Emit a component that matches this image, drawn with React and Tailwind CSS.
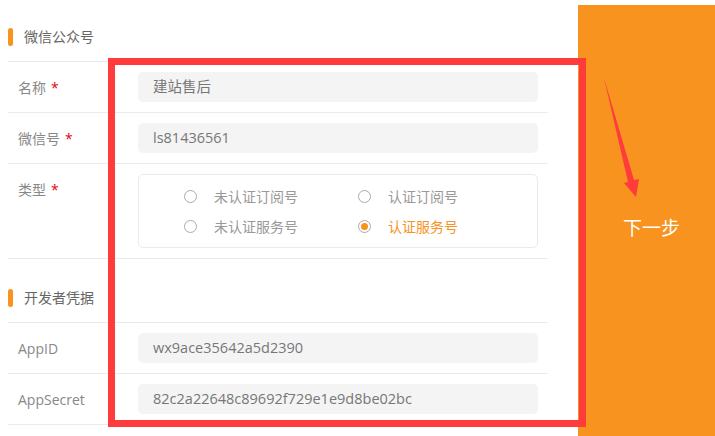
const FONT = { fontFamily: '"Open Sans", "Noto Sans CJK SC", sans-serif' };

const Section = ({ title, className }) => (
  <div className={`flex items-start border-b border-[#ebebeb] ${className}`}>
    <div className="flex h-[18px] items-center">
      <span className="h-[18px] w-[5px] rounded-full bg-[#f7931e]" />
      <span className="ml-[11px] text-[14px] leading-none text-[#666]">{title}</span>
    </div>
  </div>
);

const Row = ({ label, required, children }) => (
  <div className="flex items-start border-b border-[#ebebeb] py-[10px]">
    <div className="flex h-[30px] w-[130px] items-center pl-[10px] text-[14px] text-[#888]">
      {label}
      {required && <span className="ml-[5px] text-[#e60012]">*</span>}
    </div>
    {children}
  </div>
);

const Field = ({ value }) => (
  <div className="flex h-[30px] w-[400px] items-center rounded-[5px] bg-[#f4f4f4] pl-[15px] text-[14.5px] text-[#777]">
    {value}
  </div>
);

const Radio = ({ label, checked }) => (
  <div className="flex h-[30px] items-center">
    <span className="flex h-[13px] w-[13px] items-center justify-center rounded-full border border-[#aaa]">
      {checked && <span className="h-[7px] w-[7px] rounded-full bg-[#f7931e]" />}
    </span>
    <span className={`ml-[17px] text-[14px] ${checked ? 'text-[#f7931e]' : 'text-[#999]'}`}>{label}</span>
  </div>
);

export default function App() {
  return (
    <div className="relative flex h-[436px] w-[715px] overflow-hidden bg-white" style={FONT}>
      {/* form */}
      <div className="w-[548px] pl-[8px]">
        <Section title="微信公众号" className="h-[62px] pt-[28px]" />
        <Row label="名称" required>
          <Field value="建站售后" />
        </Row>
        <Row label="微信号" required>
          <Field value="ls81436561" />
        </Row>
        <Row label="类型" required>
          <div className="grid h-[74px] w-[400px] grid-cols-[174px_1fr] grid-rows-[30px_30px] content-start rounded-[5px] border border-[#ebebeb] pl-[45px] pt-[6px]">
            <Radio label="未认证订阅号" />
            <Radio label="认证订阅号" />
            <Radio label="未认证服务号" />
            <Radio label="认证服务号" checked />
          </div>
        </Row>
        <Section title="开发者凭据" className="h-[64px] pt-[30px]" />
        <Row label="AppID">
          <Field value="wx9ace35642a5d2390" />
        </Row>
        <Row label="AppSecret">
          <Field value="82c2a22648c89692f729e1e9d8be02bc" />
        </Row>
      </div>

      {/* next step panel */}
      <div className="ml-[30px] mt-[5px] flex-1 bg-[#f7931e] pl-[45px] pt-[211px]">
        <span className="text-[19px] leading-[24px] text-white">下一步</span>
      </div>

      {/* annotation box */}
      <div className="pointer-events-none absolute left-[108px] top-[58px] h-[369px] w-[478px] border-[7px] border-[#ff3b3b]" />

      {/* annotation arrow */}
      <svg className="pointer-events-none absolute left-0 top-0" width="715" height="436" viewBox="0 0 715 436">
        <polygon points="604,78 634,180 639,179 636,197 624,183 628,182" fill="#ff3b3b" />
      </svg>
    </div>
  );
}
